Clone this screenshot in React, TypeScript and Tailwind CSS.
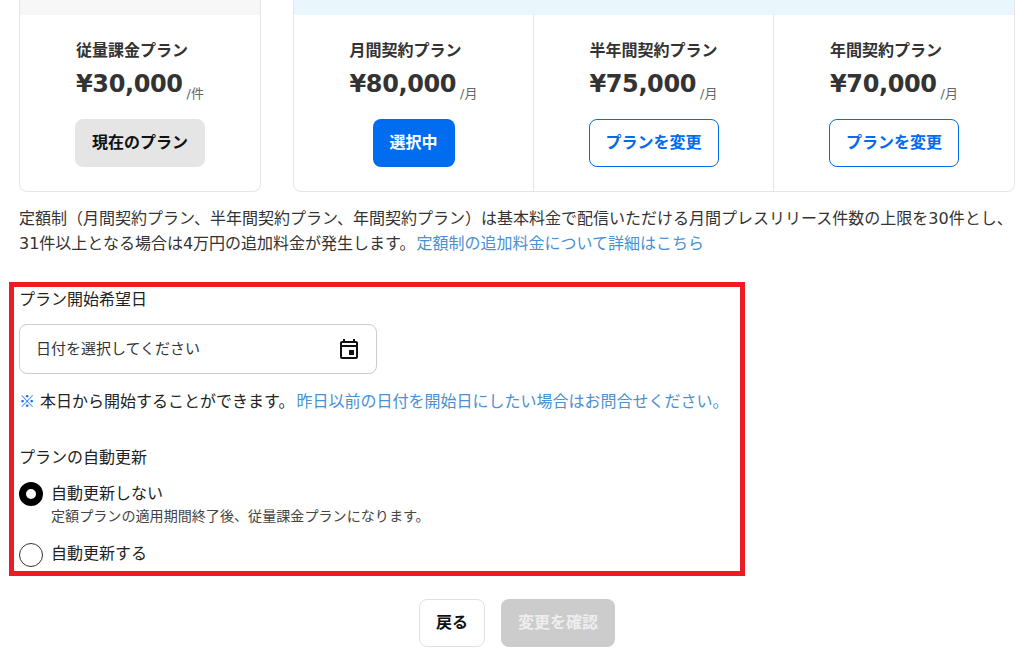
import { MdOutlineEvent } from 'react-icons/md';

const FONT = "font-['DejaVu_Sans','Noto_Sans_CJK_JP',sans-serif]";

type Plan = {
  name: string;
  price: string;
  unit: string;
  state: 'current' | 'selected' | 'change';
};

const MONTHLY: Plan[] = [
  { name: '月間契約プラン', price: '¥80,000', unit: '/月', state: 'selected' },
  { name: '半年間契約プラン', price: '¥75,000', unit: '/月', state: 'change' },
  { name: '年間契約プラン', price: '¥70,000', unit: '/月', state: 'change' },
];

function PlanButton({ state }: { state: Plan['state'] }) {
  if (state === 'current') {
    return (
      <button className="h-12 w-[130px] rounded-lg border border-[#e5e5e5] bg-[#e5e5e5] text-base font-bold text-[#111]">
        現在のプラン
      </button>
    );
  }
  if (state === 'selected') {
    return (
      <button className="h-12 w-[82px] rounded-lg bg-[#006cf0] text-base font-bold text-white">
        選択中
      </button>
    );
  }
  return (
    <button className="h-12 w-[130px] rounded-lg border border-[#006cf0] bg-white text-base font-bold text-[#006cf0]">
      プランを変更
    </button>
  );
}

function PlanCell({ plan, className }: { plan: Plan; className?: string }) {
  return (
    <div className={`flex flex-col items-center pt-[24px] ${className ?? ''}`}>
      <div>
        <div className="h-6 text-base leading-6 font-bold text-[#333]">{plan.name}</div>
        <div className="mt-[4px] flex h-[34px] items-end">
          <span className="text-[24px] leading-[34px] font-bold tracking-[-0.4px] text-[#333]">{plan.price}</span>
          <span className="mb-[-1px] ml-[4px] text-[13px] leading-4 text-[#666]">{plan.unit}</span>
        </div>
      </div>
      <div className="mt-[18px]">
        <PlanButton state={plan.state} />
      </div>
    </div>
  );
}

function Radio({ checked }: { checked: boolean }) {
  return (
    <span
      className={`block size-6 shrink-0 rounded-full bg-white ${
        checked ? 'border-[7px] border-black' : 'border border-[#333]'
      }`}
    />
  );
}

export default function App() {
  return (
    <div className={`h-[656px] w-[1030px] overflow-hidden bg-white text-[#333] ${FONT}`}>
      <div className="flex gap-8 pr-[15px] pl-[19px]">
        <div className="h-[192px] w-[242px] shrink-0 overflow-hidden rounded-b-lg border-x border-b border-[#e5e5e5]">
          <div className="h-[15px] bg-[#f7f7f7]" />
          <PlanCell plan={{ name: '従量課金プラン', price: '¥30,000', unit: '/件', state: 'current' }} />
        </div>
        <div className="h-[192px] flex-1 overflow-hidden rounded-b-lg border-x border-b border-[#e5e5e5]">
          <div className="h-[15px] bg-[#eaf6fe]" />
          <div className="grid h-[176px] grid-cols-[239px_240px_1fr]">
            {MONTHLY.map((plan, i) => (
              <PlanCell key={plan.name} plan={plan} className={i > 0 ? 'border-l border-[#e5e5e5]' : ''} />
            ))}
          </div>
        </div>
      </div>

      <p className="mt-[14px] pl-[19px] text-base leading-[25px] text-[#333]">
        定額制（月間契約プラン、半年間契約プラン、年間契約プラン）は基本料金で配信いただける月間プレスリリース件数の上限を30件とし、
        <br />
        31件以上となる場合は4万円の追加料金が発生します。
        <span className="ml-px text-[#4a90d2]">定額制の追加料金について詳細はこちら</span>
      </p>

      <div className="mt-[26px] ml-[9px] h-[294px] w-[736px] border-[5px] border-[#ed1c24] pl-[5px]">
        <div className="pt-px text-base leading-6 text-[#222]">プラン開始希望日</div>
        <div className="mt-[12px] flex h-[50px] w-[358px] items-center justify-between rounded-lg border border-[#ccc] pr-[15px] pl-[16px]">
          <span className="text-[15px] text-[#333]">日付を選択してください</span>
          <MdOutlineEvent className="size-6 text-[#111]" />
        </div>
        <p className="mt-[14px] text-base leading-6 text-[#222]">
          <span className="font-['Noto_Sans_CJK_JP'] text-[#006cf0]">※</span> 本日から開始することができます。
          <span className="ml-[2px] text-[#4a90d2]">昨日以前の日付を開始日にしたい場合はお問合せください。</span>
        </p>
        <div className="mt-[32px] text-base leading-6 text-[#222]">プランの自動更新</div>
        <div className="mt-[12px] flex gap-2">
          <Radio checked />
          <div>
            <div className="text-base leading-6 text-[#222]">自動更新しない</div>
            <div className="text-[14.08px] leading-5 text-[#444]">定額プランの適用期間終了後、従量課金プランになります。</div>
          </div>
        </div>
        <div className="mt-[17px] flex gap-2">
          <Radio checked={false} />
          <div className="text-base leading-[22px] text-[#222]">自動更新する</div>
        </div>
      </div>

      <div className="mt-[23px] flex justify-center gap-4 pl-[4px]">
        <button className="h-12 w-[66px] rounded-lg border border-[#e0e0e0] bg-white text-base font-bold text-[#111]">
          戻る
        </button>
        <button className="h-12 w-[114px] rounded-lg bg-[#ccc] text-base font-bold text-[#eee]">
          変更を確認
        </button>
      </div>
    </div>
  );
}
